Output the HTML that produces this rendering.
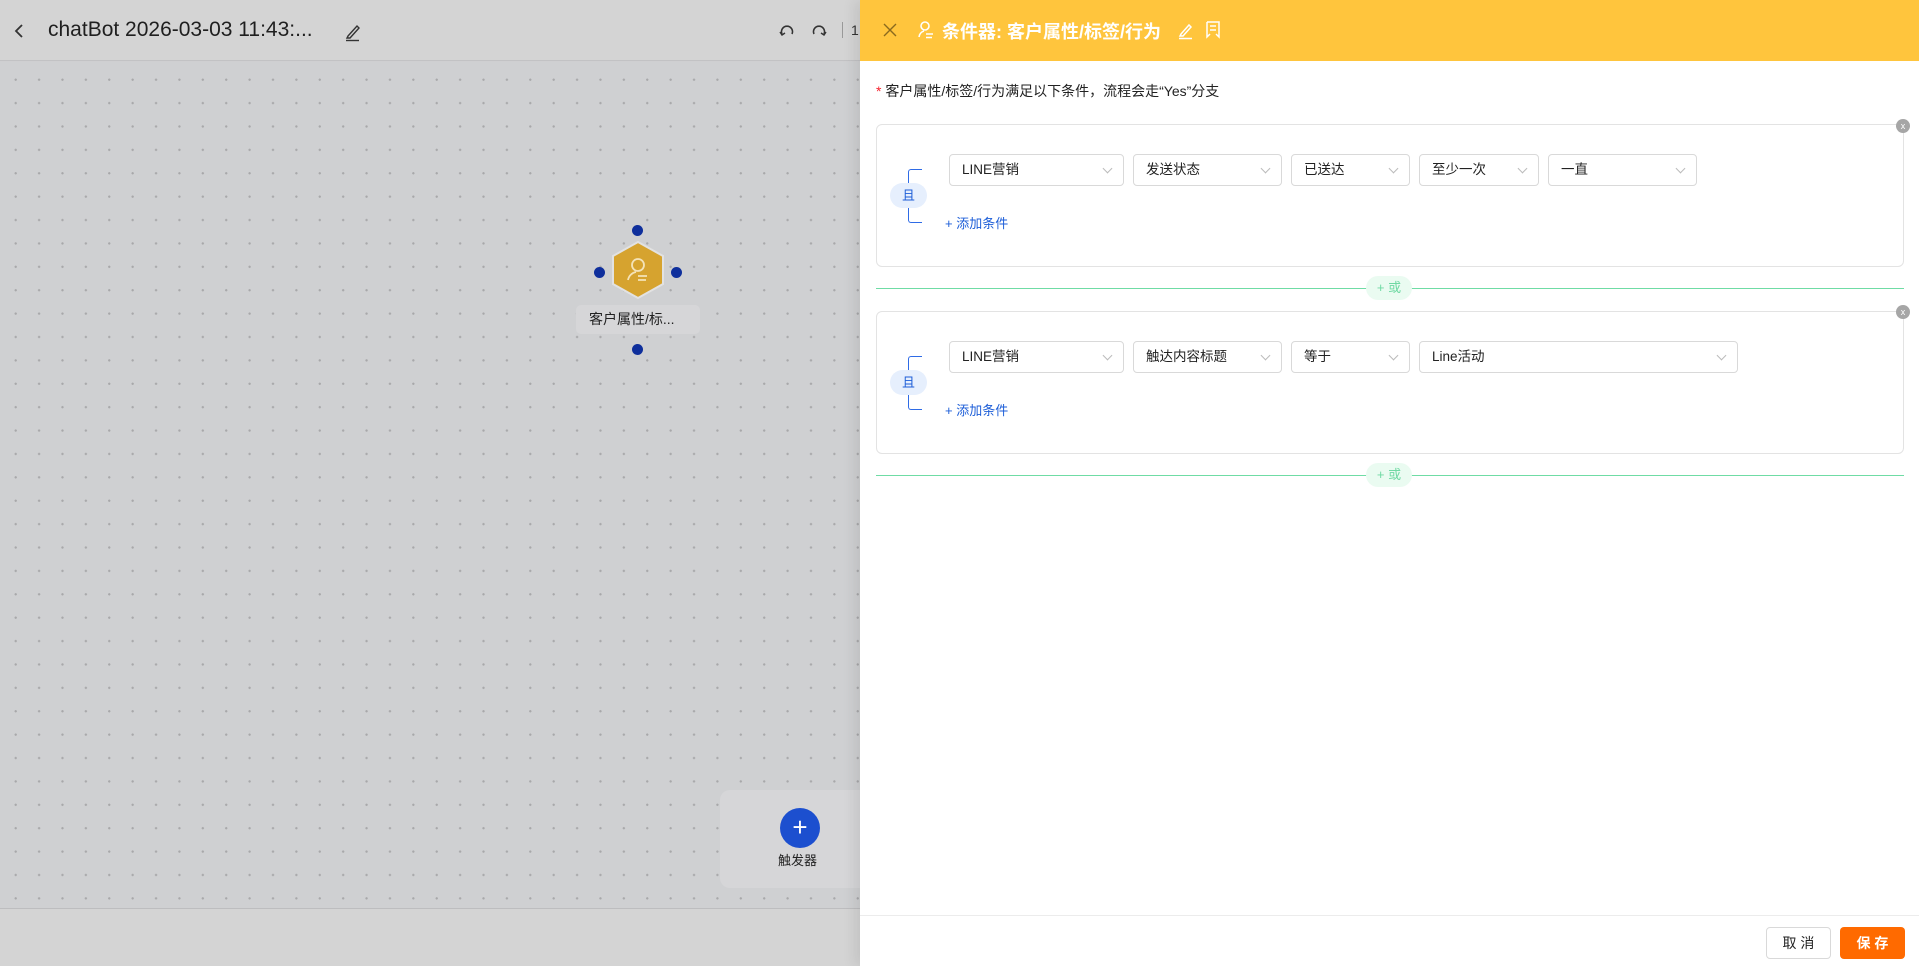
<!DOCTYPE html>
<html><head><meta charset="utf-8"><style>
*{box-sizing:border-box;margin:0;padding:0}
body{width:1919px;height:966px;overflow:hidden;position:relative;font-family:"Liberation Sans","Noto Sans CJK SC",sans-serif;background:#cfcfd1}
.abs{position:absolute}
.hdr{left:0;top:0;width:860px;height:61px;background:#d4d4d4;border-bottom:1px solid #c2c2c4}
.canvas{left:0;top:62px;width:860px;height:846px;background-color:#cfd0d2;background-image:radial-gradient(circle,#a8a8aa 1px,transparent 1.3px);background-size:23.4px 23.4px;background-position:4px 6px}
.bot{left:0;top:908px;width:860px;height:58px;background:#d4d4d4;border-top:1px solid #bdbdbf}
.panel{left:860px;top:0;width:1059px;height:966px;background:#fff;box-shadow:-6px 0 12px rgba(0,0,0,.08)}
.ph{left:0;top:0;width:1059px;height:61px;background:#ffc53d}
.card{border:1px solid #e3e3e3;border-radius:6px;background:#fff}
.sel{position:absolute;height:32px;border:1px solid #d9d9d9;border-radius:4px;font-size:13.5px;color:#222;padding-left:12px;line-height:30px}
.sel:after{content:"";position:absolute;right:12px;top:10px;width:6px;height:6px;border-right:1px solid #bbb;border-bottom:1px solid #bbb;transform:rotate(45deg)}
.badge{position:absolute;width:37px;height:25px;border-radius:13px;background:#e6effd;color:#1d5ed8;font-size:13px;text-align:center;line-height:25px}
.brk{position:absolute;width:14px;border:1px solid #2e6be6;border-right:none;border-radius:3px 0 0 3px}
.add{position:absolute;color:#1d5ed8;font-size:13px}
.orl{position:absolute;height:1px;background:#6fdca5}
.orp{position:absolute;width:46px;height:24px;border-radius:12px;background:#eafbf1;color:#6fd9a3;font-size:13px;text-align:center;line-height:24px}
.xc{position:absolute;width:14px;height:14px;border-radius:7px;background:#a6a6a6;color:#fff;font-size:9px;text-align:center;line-height:14px}
.dot{position:absolute;width:11px;height:11px;border-radius:6px;background:#0f2f9c}
</style></head><body>
<div class="abs hdr"></div>
<svg class="abs" style="left:12px;top:22px" width="14" height="18"><path d="M10 3 L4 9 L10 15" stroke="#333" stroke-width="1.8" fill="none"/></svg>
<div class="abs" style="left:48px;top:18px;font-size:21px;color:#1f1f1f">chatBot 2026-03-03 11:43:...</div>
<svg class="abs" style="left:343px;top:22px" width="20" height="20"><path d="M5 14 L14 4 L16 6 L7 16 L4 16 Z" stroke="#333" stroke-width="1.4" fill="none"/><path d="M3 18.5 H16" stroke="#333" stroke-width="1.4"/></svg>
<svg class="abs" style="left:778px;top:22px" width="18" height="18"><path d="M4 12 A5.5 5.5 0 1 1 14 12" stroke="#333" stroke-width="1.6" fill="none"/><path d="M2 10 L4 13 L7 11" stroke="#333" stroke-width="1.4" fill="none"/></svg>
<svg class="abs" style="left:810px;top:22px" width="18" height="18"><path d="M4 12 A5.5 5.5 0 1 1 14 12" stroke="#333" stroke-width="1.6" fill="none"/><path d="M16 10 L14 13 L11 11" stroke="#333" stroke-width="1.4" fill="none"/></svg>
<div class="abs" style="left:842px;top:22px;width:1px;height:16px;background:#999"></div>
<div class="abs" style="left:851px;top:22px;font-size:14px;color:#333">1</div>
<div class="abs canvas"></div>
<div class="abs bot"></div>
<svg class="abs" style="left:610px;top:240px" width="56" height="60"><polygon points="28,2 53,16 53,44 28,58 3,44 3,16" fill="#d6a32f" stroke="#e2e2e2" stroke-width="2"/><circle cx="28" cy="25" r="6" stroke="#f4e3b8" stroke-width="1.8" fill="none"/><path d="M18 40 A10 10 0 0 1 26 32" stroke="#f4e3b8" stroke-width="1.8" fill="none"/><path d="M28 36 H37 M28 40 H36" stroke="#f4e3b8" stroke-width="1.8"/></svg>
<div class="dot" style="left:632px;top:225px"></div>
<div class="dot" style="left:594px;top:267px"></div>
<div class="dot" style="left:671px;top:267px"></div>
<div class="dot" style="left:632px;top:344px"></div>
<div class="abs" style="left:576px;top:305px;width:124px;height:29px;border-radius:5px;background:#d6d6d8;font-size:14px;color:#222;line-height:29px;padding-left:13px">客户属性/标...</div>
<div class="abs" style="left:720px;top:790px;width:150px;height:98px;border-radius:10px;background:#d6d6d8"></div>
<div class="abs" style="left:780px;top:808px;width:40px;height:40px;border-radius:20px;background:#1c4fcf;color:#fff;font-size:26px;text-align:center;line-height:38px">+</div>
<div class="abs" style="left:778px;top:850px;font-size:13px;color:#222">触发器</div>
<div class="abs panel">
 <div class="abs ph"></div>
 <svg class="abs" style="left:23px;top:23px" width="14" height="14"><path d="M1 1 L13 13 M13 1 L1 13" stroke="#8a6a1e" stroke-width="1.4"/></svg>
 <svg class="abs" style="left:56px;top:20px" width="20" height="20"><circle cx="9" cy="6" r="4" stroke="#fff" stroke-width="1.6" fill="none"/><path d="M3 17 A7 7 0 0 1 8 11" stroke="#fff" stroke-width="1.6" fill="none"/><path d="M10 14 H17 M10 17.5 H16" stroke="#fff" stroke-width="1.6"/></svg>
 <div class="abs" style="left:82px;top:18px;font-size:18px;font-weight:bold;color:#fff">条件器: 客户属性/标签/行为</div>
 <svg class="abs" style="left:316px;top:20px" width="20" height="20"><path d="M5 14 L13 5 L15 7 L7 16 L4 16 Z" stroke="#fff" stroke-width="1.5" fill="none"/><path d="M3 18.5 H16" stroke="#fff" stroke-width="1.5"/></svg>
 <svg class="abs" style="left:344px;top:20px" width="18" height="20"><path d="M3 2 H15 V17 L12 14 M3 2 V17 L6 14 M6 6 H12 M6 10 H12" stroke="#fff" stroke-width="1.5" fill="none"/></svg>
 <div class="abs" style="left:16px;top:81px;font-size:14px;color:#222"><span style="color:#f5222d">*</span> 客户属性/标签/行为满足以下条件，流程会走“Yes”分支</div>

 <div class="abs card" style="left:16px;top:124px;width:1028px;height:143px"></div>
 <div class="xc" style="left:1036px;top:119px">x</div>
 <div class="brk" style="left:48px;top:169px;height:54px"></div>
 <div class="badge" style="left:30px;top:183px">且</div>
 <div class="sel" style="left:89px;top:154px;width:175px">LINE营销</div>
 <div class="sel" style="left:273px;top:154px;width:149px">发送状态</div>
 <div class="sel" style="left:431px;top:154px;width:119px">已送达</div>
 <div class="sel" style="left:559px;top:154px;width:120px">至少一次</div>
 <div class="sel" style="left:688px;top:154px;width:149px">一直</div>
 <div class="add" style="left:85px;top:213px">+ 添加条件</div>

 <div class="orl" style="left:16px;top:288px;width:1028px"></div>
 <div class="orp" style="left:506px;top:276px">+ 或</div>

 <div class="abs card" style="left:16px;top:311px;width:1028px;height:143px"></div>
 <div class="xc" style="left:1036px;top:305px">x</div>
 <div class="brk" style="left:48px;top:356px;height:54px"></div>
 <div class="badge" style="left:30px;top:370px">且</div>
 <div class="sel" style="left:89px;top:341px;width:175px">LINE营销</div>
 <div class="sel" style="left:273px;top:341px;width:149px">触达内容标题</div>
 <div class="sel" style="left:431px;top:341px;width:119px">等于</div>
 <div class="sel" style="left:559px;top:341px;width:319px">Line活动</div>
 <div class="add" style="left:85px;top:400px">+ 添加条件</div>

 <div class="orl" style="left:16px;top:475px;width:1028px"></div>
 <div class="orp" style="left:506px;top:463px">+ 或</div>

 <div class="abs" style="left:0;top:915px;width:1059px;height:1px;background:#ececec"></div>
 <div class="abs" style="left:906px;top:927px;width:65px;height:32px;border:1px solid #d9d9d9;border-radius:4px;font-size:14px;color:#222;text-align:center;line-height:30px">取 消</div>
 <div class="abs" style="left:980px;top:927px;width:65px;height:32px;border-radius:4px;background:#ff6a00;font-size:14px;color:#fff;text-align:center;line-height:32px;font-weight:bold">保 存</div>
</div>
</body></html>
